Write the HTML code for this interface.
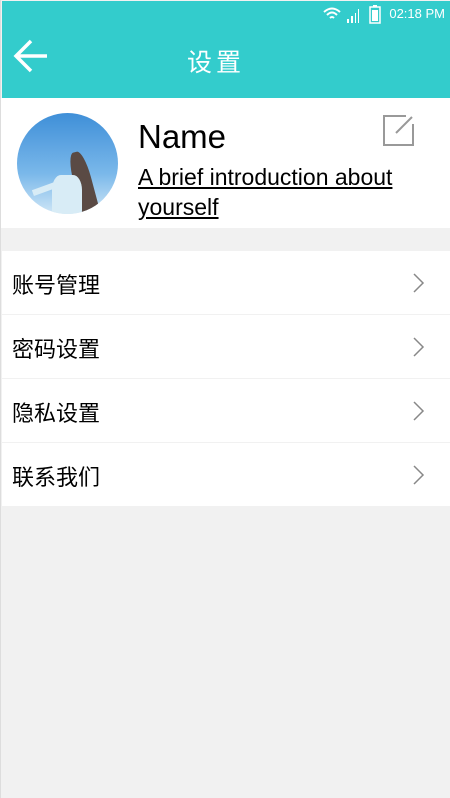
<!DOCTYPE html>
<html><head><meta charset="utf-8"><style>
body{margin:0;width:450px;height:798px;background:#f1f1f1;font-family:"Liberation Sans","Noto Sans CJK SC",sans-serif;overflow:hidden;position:relative;border-left:1px solid #ddd;box-sizing:border-box}
.hdr{position:absolute;left:1px;top:1px;width:449px;height:97px;background:#33cccc}
.time{position:absolute;right:6px;top:5px;color:#fff;font-size:13px}
.title{position:absolute;left:0;width:428px;text-align:center;top:42px;color:#fff;font-size:25px;letter-spacing:4px}
.prof{position:absolute;left:0;top:98px;width:450px;height:130px;background:#fff}
.av{position:absolute;left:16px;top:15px;width:101px;height:101px;border-radius:50%;background:linear-gradient(#3f8fd8,#7ab8ea 60%,#cfe6f6);overflow:hidden}
.name{position:absolute;left:137px;top:20px;font-size:33px;color:#000}
.intro{position:absolute;left:137px;top:64px;font-size:23px;line-height:30px;text-decoration:underline;color:#000;width:300px}
.row{position:absolute;left:1px;width:449px;height:63px;background:#fff;font-size:22px;color:#000}
.row span{position:absolute;left:10px;top:17px}
.row svg{position:absolute;right:26px;top:22px}
</style></head><body>
<div class="hdr">
<svg style="position:absolute;left:321px;top:5px" width="50" height="18"><path d="M1 6 Q9 -1 17 6 M4 9 Q9 4 14 9 M7 12 Q9 10 11 12" stroke="#fff" stroke-width="2" fill="none"/><rect x="24" y="13" width="2" height="4" fill="#fff"/><rect x="28" y="10" width="2" height="7" fill="#fff"/><rect x="32" y="7" width="1" height="10" fill="#fff"/><rect x="35" y="3" width="1" height="14" fill="#fff"/></svg>
<svg style="position:absolute;left:367px;top:4px" width="12" height="19"><rect x="1" y="2" width="10" height="16" stroke="#fff" stroke-width="1.5" fill="none"/><rect x="3" y="5" width="6" height="11" fill="#fff"/><rect x="4" y="0" width="4" height="2" fill="#fff"/></svg>
<div class="time">02:18 PM</div>
<svg style="position:absolute;left:11px;top:38px" width="36" height="34"><path d="M3 17 H34 M18 2 L3 17 L18 32" stroke="#fff" stroke-width="3.5" fill="none"/></svg>
<div class="title">设置</div>
</div>
<div class="prof">
<div class="av"><div style="position:absolute;left:58px;top:38px;width:18px;height:70px;background:#5a4a44;border-radius:40% 40% 0 0;transform:rotate(-15deg)"></div><div style="position:absolute;left:35px;top:62px;width:30px;height:50px;background:#d8ecf6;border-radius:30%"></div><div style="position:absolute;left:15px;top:72px;width:30px;height:6px;background:#d8ecf6;transform:rotate(-20deg)"></div></div>
<div class="name">Name</div>
<div class="intro">A brief introduction about yourself</div>
<svg style="position:absolute;left:381px;top:17px" width="32" height="32"><path d="M24 1 H2 V30 H31 V9" stroke="#999" stroke-width="2" fill="none"/><path d="M30 2 L14 18" stroke="#999" stroke-width="2"/></svg>
</div>
<div class="row" style="top:251px"><span>账号管理</span><svg width="12" height="20"><path d="M1 1 L10 10 L1 19" stroke="#888" stroke-width="1.5" fill="none"/></svg></div>
<div class="row" style="top:315px"><span>密码设置</span><svg width="12" height="20"><path d="M1 1 L10 10 L1 19" stroke="#888" stroke-width="1.5" fill="none"/></svg></div>
<div class="row" style="top:379px"><span>隐私设置</span><svg width="12" height="20"><path d="M1 1 L10 10 L1 19" stroke="#888" stroke-width="1.5" fill="none"/></svg></div>
<div class="row" style="top:443px"><span>联系我们</span><svg width="12" height="20"><path d="M1 1 L10 10 L1 19" stroke="#888" stroke-width="1.5" fill="none"/></svg></div>
</body></html>
